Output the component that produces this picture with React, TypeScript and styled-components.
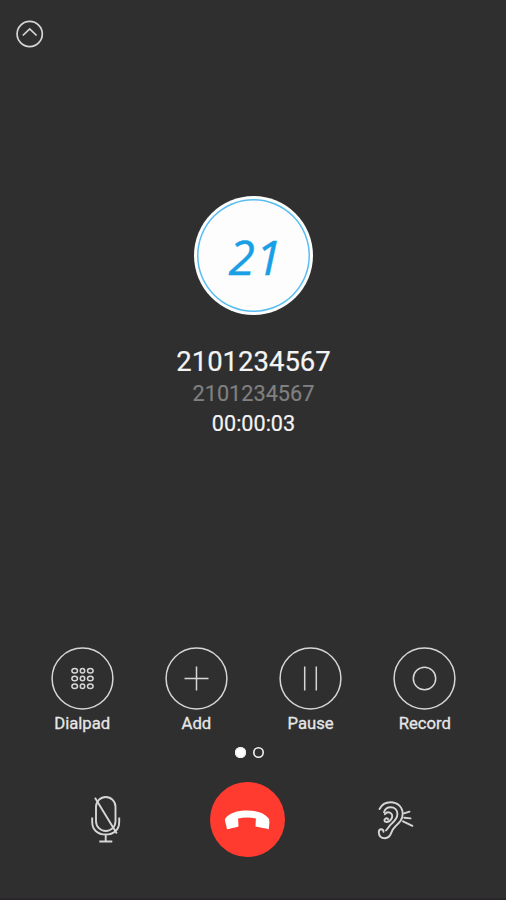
import React from "react";
import styled, { createGlobalStyle } from "styled-components";

const GlobalStyle = createGlobalStyle`
  * { box-sizing: border-box; }
  body { margin: 0; background: #2f2f2f; }
`;

const Screen = styled.main`
  width: 506px;
  height: 900px;
  display: flex;
  flex-direction: column;
  align-items: center;
  overflow: hidden;
  background: #2f2f2f;
  color: #f4f4f4;
  font-family: Roboto, sans-serif;
  border-bottom: 2px solid #2a252a;
`;

const Icon = styled.svg`
  display: block;
  flex: none;
  fill: none;
  stroke: #d6d6d6;
  overflow: visible;
`;

const PlainButton = styled.button`
  padding: 0;
  border: 0;
  background: none;
  color: inherit;
  font: inherit;
  display: flex;
  align-items: center;
  justify-content: center;
`;

const Header = styled.header`
  align-self: stretch;
  height: 196px;
  padding: 20px 16px;
`;

const Avatar = styled.div`
  width: 119px;
  height: 119px;
  margin: 0 0 1px 1px;
  padding: 3px;
  border-radius: 50%;
  background: #fdfdfd;
`;

const AvatarRing = styled.div`
  width: 113px;
  height: 113px;
  box-shadow: inset 0 0 0 1.5px #58bdf1;
  border-radius: 50%;
  display: flex;
  align-items: center;
  justify-content: center;
  padding: 2px 0 0 4px;
  color: #189fe6;
  font: italic 400 47.8px/1 "Open Sans", sans-serif;
  letter-spacing: 0.6px;
  -webkit-text-stroke: 0.4px #189fe6;
`;

const Caller = styled.section`
  height: 331px;
  padding: 29px 0 0 1px;
  display: flex;
  flex-direction: column;
  align-items: center;
`;

const Line = styled.div<{ $size: number; $height: number; $color?: string }>`
  font-size: ${(p) => p.$size}px;
  line-height: ${(p) => p.$height}px;
  color: ${(p) => p.$color ?? "#f4f4f4"};
  -webkit-text-stroke: 0.2px currentColor;
`;

const Actions = styled.nav`
  display: grid;
  grid-template-columns: repeat(4, 114.2px);
  height: 100px;
  margin-left: 1px;
`;

const Action = styled.div`
  display: flex;
  flex-direction: column;
  align-items: center;
`;

const ActionLabel = styled.span`
  margin-top: 4px;
  font-size: 16.7px;
  line-height: 20px;
  color: #e6e6e6;
  -webkit-text-stroke: 0.3px #e6e6e6;
`;

const Pager = styled.div`
  display: flex;
  gap: 7px;
  height: 35px;
  margin-right: 7px;
`;

const Dot = styled.span<{ $active?: boolean }>`
  width: 11px;
  height: 11px;
  box-shadow: inset 0 0 0 1.6px #f2f2f2;
  border-radius: 50%;
  background: ${(p) => (p.$active ? "#fff" : "transparent")};
`;

const CallBar = styled.footer`
  align-self: stretch;
  display: flex;
  justify-content: space-between;
  align-items: center;
  padding: 0 92px 0 90px;
`;

const HangUp = styled(PlainButton)`
  width: 75px;
  height: 75px;
  margin-right: 6px;
  border-radius: 50%;
  background: #ff3b30;
`;

const DialpadGlyph = () => (
  <>
    {[23.7, 31.5, 39.3].map((y) =>
      [23.7, 31.5, 39.3].map((x) => (
        <ellipse key={`${x}-${y}`} cx={x} cy={y} rx={x === 31.5 ? 2.2 : 2.8} ry="2.3" />
      ))
    )}
  </>
);

const AddGlyph = () => <path d="M19.500 31.500h24M31.500 19.500v24" />;
const PauseGlyph = () => <path d="M25.700 19.500v24M37.300 19.500v24" />;
const RecordGlyph = () => <circle cx="31.5" cy="31.5" r="11.2" />;

const actions = [
  { label: "Dialpad", Glyph: DialpadGlyph },
  { label: "Add", Glyph: AddGlyph },
  { label: "Pause", Glyph: PauseGlyph },
  { label: "Record", Glyph: RecordGlyph },
];

export default function App() {
  return (
    <>
      <GlobalStyle />
      <Screen>
        <Header>
          <PlainButton aria-label="Minimize call">
            <Icon width="28" height="28" viewBox="0 0 28 28" strokeWidth="1.7">
              <circle cx="13.7" cy="14" r="12.6" />
              <path d="M6.800 15.500 13.700 9l6.900 6.500" />
            </Icon>
          </PlainButton>
        </Header>
        <Avatar>
          <AvatarRing>21</AvatarRing>
        </Avatar>
        <Caller>
          <Line $size={27.5} $height={33}>2101234567</Line>
          <Line $size={21.7} $height={31} $color="#808080">2101234567</Line>
          <Line $size={21.6} $height={29}>00:00:03</Line>
        </Caller>
        <Actions>
          {actions.map(({ label, Glyph }) => (
            <Action key={label}>
              <PlainButton aria-label={label}>
                <Icon width="63" height="63" viewBox="0 0 63 63" strokeWidth="1.5">
                  <circle cx="31.5" cy="31.5" r="30.4" />
                  <Glyph />
                </Icon>
              </PlainButton>
              <ActionLabel>{label}</ActionLabel>
            </Action>
          ))}
        </Actions>
        <Pager>
          <Dot $active />
          <Dot />
        </Pager>
        <CallBar>
          <PlainButton aria-label="Mute">
            <Icon width="32" height="50" viewBox="0 0 32 50" strokeWidth="1.9">
              <rect x="6" y="2" width="19.5" height="34" rx="9.75" />
              <path d="M2.200 22.500v4.500c0 7.800 5.500 12.500 13.500 12.500s13.500-4.700 13.500-12.500v-4.500M15.700 39.500v7M9.300 46.500h13M5 2.700 26.800 38.500" />
            </Icon>
          </PlainButton>
          <HangUp aria-label="End call">
            <Icon width="46" height="20" viewBox="0 0 46 20">
              <path
                d="M1.300 8.500C5.500 2.900 13 .5 23 .5s17.500 2.400 21.700 8c1 1.600.7 4.800.1 10.700-3.500-.8-8-1.400-13.300-2.700l.4-8.100c-5.800-1.200-12-1.200-17.800 0l.4 8.100c-5.300 1.300-7.500 2.100-11.500 2.700C2.500 14.300.2 10.700 1.300 8.500Z"
                fill="#fff"
                stroke="none"
              />
            </Icon>
          </HangUp>
          <PlainButton aria-label="Speaker">
            <Icon width="36" height="38" viewBox="0 0 36 38" strokeWidth="1.9" strokeLinecap="round">
              <path d="M1.500 8C4 3 8 1.200 12.500 1.200c7.500 0 12.200 5.200 12.200 11.600 0 5.800-3.200 8.800-7 12.200-2.400 2.200-3.600 4.200-4.600 7.200-1.200 3.200-3.200 5-6.200 5-4 0-6.100-2.600-6.100-6 0-1.800 1-3 2.400-3s2.300 1.200 2.300 2.600" />
              <path d="M6 11.200c1-3.400 3.400-5 6.600-5 4.200 0 6.800 2.900 6.800 6.900 0 4.800-2.800 7-6 9.800-2.400 2.200-3.400 4.600-5.400 6.500" />
              <path d="M6.800 13.200c1.400-1.800 3.200-2.400 5-1.600 2.500 1.100 3 3.600 1.800 5.900-1.200 2.200-3.600 3.600-5.600 3.400-1.900-.2-2-2.200-.7-3.100 1-.8 1.900-.6 2.700.2" />
              <path d="m26 12.300 5.500-1.600M26.300 16.700l6.200.7M25 20.300l9.400 4.500" />
            </Icon>
          </PlainButton>
        </CallBar>
      </Screen>
    </>
  );
}
